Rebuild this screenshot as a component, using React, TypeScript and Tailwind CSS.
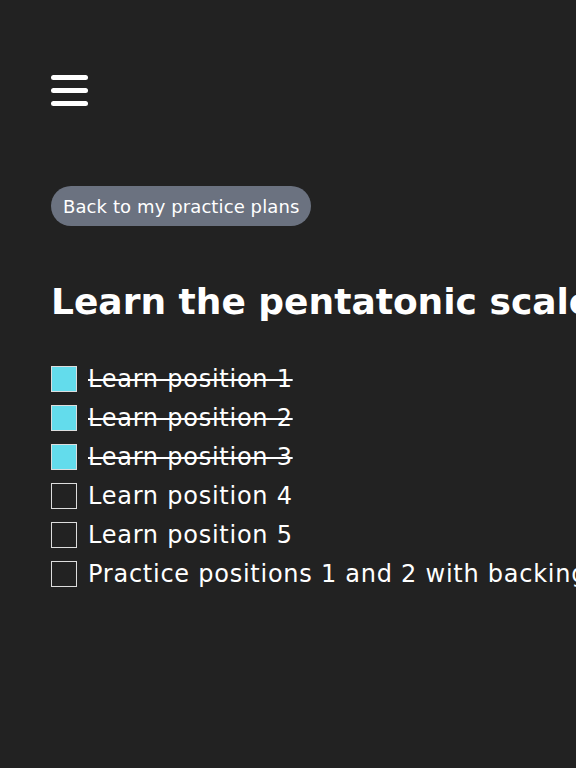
import { useState } from "react";

type Task = { id: number; label: string; done: boolean };

const INITIAL_TASKS: Task[] = [
  { id: 1, label: "Learn position 1", done: true },
  { id: 2, label: "Learn position 2", done: true },
  { id: 3, label: "Learn position 3", done: true },
  { id: 4, label: "Learn position 4", done: false },
  { id: 5, label: "Learn position 5", done: false },
  { id: 6, label: "Practice positions 1 and 2 with backing track", done: false },
];

export default function App() {
  const [tasks, setTasks] = useState<Task[]>(INITIAL_TASKS);

  const toggle = (id: number) =>
    setTasks((prev) => prev.map((t) => (t.id === id ? { ...t, done: !t.done } : t)));

  return (
    <div className="min-h-screen w-full overflow-hidden bg-[#222222] text-white font-['DejaVu_Sans',sans-serif]">
      <div className="pl-[51px] pt-[75px]">
        {/* Menu */}
        <button className="flex flex-col gap-[8px]" aria-label="Menu">
          <span className="block h-[5px] w-[37px] rounded-full bg-white" />
          <span className="block h-[5px] w-[37px] rounded-full bg-white" />
          <span className="block h-[5px] w-[37px] rounded-full bg-white" />
        </button>

        <button className="mt-[80px] h-[40px] rounded-full bg-[#6b7280] px-[12px] text-[18px] tracking-[0.1px] text-white">
          Back to my practice plans
        </button>

        <h1 className="mt-[52px] whitespace-nowrap text-[36px] font-bold leading-[48px]">
          Learn the pentatonic scale
        </h1>

        <ul className="mt-[33px] flex flex-col">
          {tasks.map((t) => (
            <li key={t.id} className="flex h-[39px] items-center gap-[11px] whitespace-nowrap">
              <button
                onClick={() => toggle(t.id)}
                className={`h-[26px] w-[26px] shrink-0 border-[1.5px] border-[#dddddd] ${
                  t.done ? "bg-[#63dcec]" : "bg-transparent"
                }`}
                aria-label={t.label}
              />
              <span
                className={`text-[24px] leading-[32px] tracking-[0.75px] ${
                  t.done ? "line-through decoration-2" : ""
                }`}
              >
                {t.label}
              </span>
            </li>
          ))}
        </ul>
      </div>
    </div>
  );
}
